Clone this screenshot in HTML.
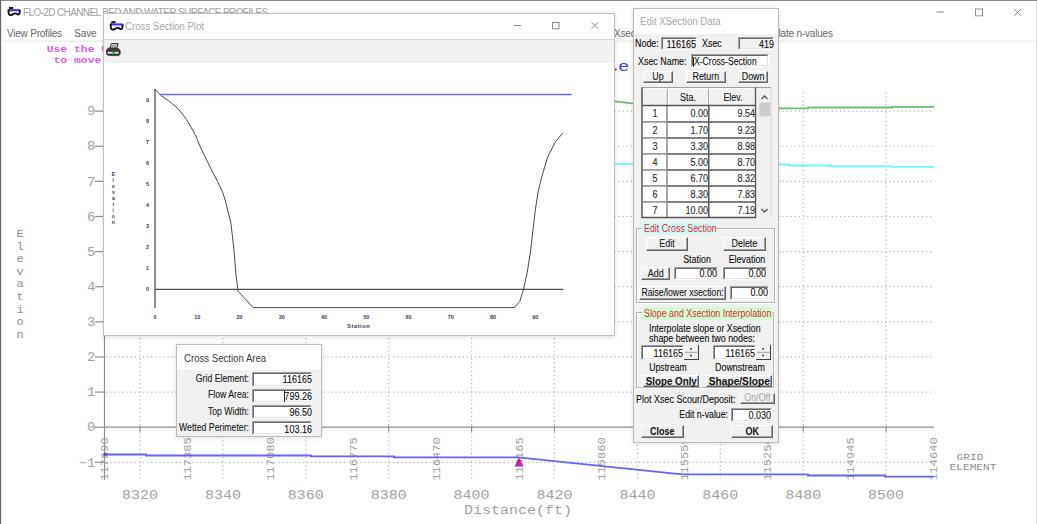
<!DOCTYPE html><html><head><meta charset="utf-8"><style>html,body{margin:0;padding:0;}body{width:1037px;height:524px;position:relative;overflow:hidden;background:#fff;font-family:"Liberation Sans",sans-serif;}.t{position:absolute;white-space:nowrap;}.k{-webkit-text-stroke:0.12px currentColor;}.b{position:absolute;box-sizing:border-box;}svg{position:absolute;left:0;top:0;}</style></head><body><svg width="1037" height="524" viewBox="0 0 1037 524"><rect x="0" y="0" width="1037" height="1" fill="#8a8a8a"/><rect x="0" y="0" width="1.2" height="524" fill="#6a6a6a"/><rect x="1036" y="1" width="1" height="523" fill="#dcdcdc"/><rect x="1" y="40.6" width="1035" height="1" fill="#e4e4e4"/><g stroke="#8c8c8c" stroke-width="1" fill="none"><line x1="936.5" y1="12" x2="944" y2="12"/><rect x="975.5" y="9" width="7" height="6.8"/><line x1="1014.2" y1="9" x2="1021" y2="15.8"/><line x1="1021" y1="9" x2="1014.2" y2="15.8"/></g><g stroke="#b4b4b4" stroke-width="1.2" stroke-dasharray="1.2 2.9" fill="none"><line x1="106" y1="111.12" x2="934" y2="111.12"/><line x1="106" y1="146.24" x2="934" y2="146.24"/><line x1="106" y1="181.36" x2="934" y2="181.36"/><line x1="106" y1="216.48" x2="934" y2="216.48"/><line x1="106" y1="251.60" x2="934" y2="251.60"/><line x1="106" y1="286.72" x2="934" y2="286.72"/><line x1="106" y1="321.84" x2="934" y2="321.84"/><line x1="106" y1="356.96" x2="934" y2="356.96"/><line x1="106" y1="392.08" x2="934" y2="392.08"/><line x1="106" y1="462.32" x2="934" y2="462.32"/><line x1="140.00" y1="92" x2="140.00" y2="479"/><line x1="222.90" y1="92" x2="222.90" y2="479"/><line x1="305.80" y1="92" x2="305.80" y2="479"/><line x1="388.70" y1="92" x2="388.70" y2="479"/><line x1="471.60" y1="92" x2="471.60" y2="479"/><line x1="554.50" y1="92" x2="554.50" y2="479"/><line x1="637.40" y1="92" x2="637.40" y2="479"/><line x1="720.30" y1="92" x2="720.30" y2="479"/><line x1="803.20" y1="92" x2="803.20" y2="479"/><line x1="886.10" y1="92" x2="886.10" y2="479"/></g><g stroke="#8e8e8e" stroke-width="1.2" fill="none"><line x1="104.5" y1="92" x2="104.5" y2="480"/><line x1="104.5" y1="427.20" x2="934" y2="427.20"/><line x1="95" y1="111.12" x2="104.5" y2="111.12"/><line x1="95" y1="146.24" x2="104.5" y2="146.24"/><line x1="95" y1="181.36" x2="104.5" y2="181.36"/><line x1="95" y1="216.48" x2="104.5" y2="216.48"/><line x1="95" y1="251.60" x2="104.5" y2="251.60"/><line x1="95" y1="286.72" x2="104.5" y2="286.72"/><line x1="95" y1="321.84" x2="104.5" y2="321.84"/><line x1="95" y1="356.96" x2="104.5" y2="356.96"/><line x1="95" y1="392.08" x2="104.5" y2="392.08"/><line x1="95" y1="427.20" x2="104.5" y2="427.20"/><line x1="95" y1="462.32" x2="104.5" y2="462.32"/><line x1="140.00" y1="425.70" x2="140.00" y2="431.70"/><line x1="222.90" y1="425.70" x2="222.90" y2="431.70"/><line x1="305.80" y1="425.70" x2="305.80" y2="431.70"/><line x1="388.70" y1="425.70" x2="388.70" y2="431.70"/><line x1="471.60" y1="425.70" x2="471.60" y2="431.70"/><line x1="554.50" y1="425.70" x2="554.50" y2="431.70"/><line x1="637.40" y1="425.70" x2="637.40" y2="431.70"/><line x1="720.30" y1="425.70" x2="720.30" y2="431.70"/><line x1="803.20" y1="425.70" x2="803.20" y2="431.70"/><line x1="886.10" y1="425.70" x2="886.10" y2="431.70"/></g><text transform="translate(95.5,115.32) scale(1,0.87)" text-anchor="end" font-family="Liberation Mono" font-size="14" fill="#a2a2a2">9</text><text transform="translate(95.5,150.44) scale(1,0.87)" text-anchor="end" font-family="Liberation Mono" font-size="14" fill="#a2a2a2">8</text><text transform="translate(95.5,185.56) scale(1,0.87)" text-anchor="end" font-family="Liberation Mono" font-size="14" fill="#a2a2a2">7</text><text transform="translate(95.5,220.68) scale(1,0.87)" text-anchor="end" font-family="Liberation Mono" font-size="14" fill="#a2a2a2">6</text><text transform="translate(95.5,255.80) scale(1,0.87)" text-anchor="end" font-family="Liberation Mono" font-size="14" fill="#a2a2a2">5</text><text transform="translate(95.5,290.92) scale(1,0.87)" text-anchor="end" font-family="Liberation Mono" font-size="14" fill="#a2a2a2">4</text><text transform="translate(95.5,326.04) scale(1,0.87)" text-anchor="end" font-family="Liberation Mono" font-size="14" fill="#a2a2a2">3</text><text transform="translate(95.5,361.16) scale(1,0.87)" text-anchor="end" font-family="Liberation Mono" font-size="14" fill="#a2a2a2">2</text><text transform="translate(95.5,396.28) scale(1,0.87)" text-anchor="end" font-family="Liberation Mono" font-size="14" fill="#a2a2a2">1</text><text transform="translate(95.5,431.40) scale(1,0.87)" text-anchor="end" font-family="Liberation Mono" font-size="14" fill="#a2a2a2">0</text><text transform="translate(95.5,466.52) scale(1,0.87)" text-anchor="end" font-family="Liberation Mono" font-size="14" fill="#a2a2a2">&#8722;1</text><text transform="translate(140.00,498.8) scale(1,0.87)" text-anchor="middle" font-family="Liberation Mono" font-size="15" fill="#a2a2a2">8320</text><text transform="translate(222.90,498.8) scale(1,0.87)" text-anchor="middle" font-family="Liberation Mono" font-size="15" fill="#a2a2a2">8340</text><text transform="translate(305.80,498.8) scale(1,0.87)" text-anchor="middle" font-family="Liberation Mono" font-size="15" fill="#a2a2a2">8360</text><text transform="translate(388.70,498.8) scale(1,0.87)" text-anchor="middle" font-family="Liberation Mono" font-size="15" fill="#a2a2a2">8380</text><text transform="translate(471.60,498.8) scale(1,0.87)" text-anchor="middle" font-family="Liberation Mono" font-size="15" fill="#a2a2a2">8400</text><text transform="translate(554.50,498.8) scale(1,0.87)" text-anchor="middle" font-family="Liberation Mono" font-size="15" fill="#a2a2a2">8420</text><text transform="translate(637.40,498.8) scale(1,0.87)" text-anchor="middle" font-family="Liberation Mono" font-size="15" fill="#a2a2a2">8440</text><text transform="translate(720.30,498.8) scale(1,0.87)" text-anchor="middle" font-family="Liberation Mono" font-size="15" fill="#a2a2a2">8460</text><text transform="translate(803.20,498.8) scale(1,0.87)" text-anchor="middle" font-family="Liberation Mono" font-size="15" fill="#a2a2a2">8480</text><text transform="translate(886.10,498.8) scale(1,0.87)" text-anchor="middle" font-family="Liberation Mono" font-size="15" fill="#a2a2a2">8500</text><text transform="translate(108.00,459) rotate(-90) scale(1,0.85)" text-anchor="middle" font-family="Liberation Mono" font-size="12" fill="#a0a0a0">117690</text><text transform="translate(190.90,459) rotate(-90) scale(1,0.85)" text-anchor="middle" font-family="Liberation Mono" font-size="12" fill="#a0a0a0">117385</text><text transform="translate(273.80,459) rotate(-90) scale(1,0.85)" text-anchor="middle" font-family="Liberation Mono" font-size="12" fill="#a0a0a0">117080</text><text transform="translate(356.70,459) rotate(-90) scale(1,0.85)" text-anchor="middle" font-family="Liberation Mono" font-size="12" fill="#a0a0a0">116775</text><text transform="translate(439.60,459) rotate(-90) scale(1,0.85)" text-anchor="middle" font-family="Liberation Mono" font-size="12" fill="#a0a0a0">116470</text><text transform="translate(522.50,459) rotate(-90) scale(1,0.85)" text-anchor="middle" font-family="Liberation Mono" font-size="12" fill="#a0a0a0">116165</text><text transform="translate(605.40,459) rotate(-90) scale(1,0.85)" text-anchor="middle" font-family="Liberation Mono" font-size="12" fill="#a0a0a0">115860</text><text transform="translate(688.30,459) rotate(-90) scale(1,0.85)" text-anchor="middle" font-family="Liberation Mono" font-size="12" fill="#a0a0a0">115555</text><text transform="translate(771.20,459) rotate(-90) scale(1,0.85)" text-anchor="middle" font-family="Liberation Mono" font-size="12" fill="#a0a0a0">115250</text><text transform="translate(854.10,459) rotate(-90) scale(1,0.85)" text-anchor="middle" font-family="Liberation Mono" font-size="12" fill="#a0a0a0">114945</text><text transform="translate(937.00,459) rotate(-90) scale(1,0.85)" text-anchor="middle" font-family="Liberation Mono" font-size="12" fill="#a0a0a0">114640</text><text transform="translate(518,514) scale(1,0.87)" text-anchor="middle" font-family="Liberation Mono" font-size="15" fill="#a2a2a2">Distance(ft)</text><text transform="translate(970,460.3) scale(1,0.87)" text-anchor="middle" font-family="Liberation Mono" font-size="11.2" fill="#8a8a8a">GRID</text><text transform="translate(973,469.6) scale(1,0.87)" text-anchor="middle" font-family="Liberation Mono" font-size="11.2" fill="#8a8a8a">ELEMENT</text><text transform="translate(20,237.00) scale(1,0.87)" text-anchor="middle" font-family="Liberation Mono" font-size="12" fill="#8e8e8e">E</text><text transform="translate(20,249.62) scale(1,0.87)" text-anchor="middle" font-family="Liberation Mono" font-size="12" fill="#8e8e8e">l</text><text transform="translate(20,262.24) scale(1,0.87)" text-anchor="middle" font-family="Liberation Mono" font-size="12" fill="#8e8e8e">e</text><text transform="translate(20,274.86) scale(1,0.87)" text-anchor="middle" font-family="Liberation Mono" font-size="12" fill="#8e8e8e">v</text><text transform="translate(20,287.48) scale(1,0.87)" text-anchor="middle" font-family="Liberation Mono" font-size="12" fill="#8e8e8e">a</text><text transform="translate(20,300.10) scale(1,0.87)" text-anchor="middle" font-family="Liberation Mono" font-size="12" fill="#8e8e8e">t</text><text transform="translate(20,312.72) scale(1,0.87)" text-anchor="middle" font-family="Liberation Mono" font-size="12" fill="#8e8e8e">i</text><text transform="translate(20,325.34) scale(1,0.87)" text-anchor="middle" font-family="Liberation Mono" font-size="12" fill="#8e8e8e">o</text><text transform="translate(20,337.96) scale(1,0.87)" text-anchor="middle" font-family="Liberation Mono" font-size="12" fill="#8e8e8e">n</text><polyline fill="none" stroke="#6cbf6c" stroke-width="1.8" points="560,99 615,101.4 632,103.4 700,106 777,108.4 808.5,108.4 808.5,107.5 892,107.5 892,106.8 934,106.8"/><polyline fill="none" stroke="#6ef7f7" stroke-width="1.8" points="560,163.5 632,164.2 789,164.3 789,165.5 831,165.5 831,166.3 892,166.3 892,166.8 934,166.8"/><polyline fill="none" stroke="#6464f5" stroke-width="1.8" points="105,454.5 146,454.5 146,455.5 311,455.5 311,456.4 394,456.4 394,457.3 518,457.3 682,474.4 808,474.4 808,475.5 885,475.5 885,476.6 934,476.6"/><circle cx="105" cy="454.5" r="1.8" fill="#5050d0"/><polygon points="519,457.5 523.5,466.5 514.5,466.5" fill="#c020b0"/><circle cx="615.6" cy="69.6" r="1.1" fill="#3a3aff"/><text transform="translate(618.6,70.6) scale(1.2,1)" font-family="Liberation Sans" font-size="15.5" fill="#3a3aff">e</text></svg><svg style="left:4px;top:4px" width="20.0" height="16.0" viewBox="0 0 20 16"><rect x="5" y="3" width="4.2" height="2" fill="#1a1a1a"/><rect x="4.6" y="5.1" width="11.2" height="2.1" fill="#3535f0"/><rect x="5.5" y="7.2" width="9.5" height="0.9" fill="#c8c8ff"/><path d="M4.5 5.2 C4.3 8,4.7 10.8,6.2 11.1 C7.8 11.4,8.8 9.9,10.3 9.6 C11.3 9.4,12.1 9.4,12.7 9.8 C13.3 10.3,13.8 10.8,14.6 10.5 C15.6 10.1,15.9 8,15.8 5.8" stroke="#111" stroke-width="1.8" fill="none"/></svg><div class="t" style="left:23.00px;top:8.04px;font-size:10px;line-height:10px;color:#a0a0a0;font-family:'Liberation Sans', sans-serif;letter-spacing:-0.62px;">FLO-2D CHANNEL BED AND WATER SURFACE PROFILES</div><div class="t" style="left:6.90px;top:29.04px;font-size:10px;line-height:10px;color:#666;font-family:'Liberation Sans', sans-serif;letter-spacing:-0.2px;">View Profiles</div><div class="t" style="left:74.30px;top:29.04px;font-size:10px;line-height:10px;color:#666;font-family:'Liberation Sans', sans-serif;letter-spacing:-0.2px;">Save</div><div class="t" style="left:614.00px;top:29.04px;font-size:10px;line-height:10px;color:#666;font-family:'Liberation Sans', sans-serif;letter-spacing:-0.2px;">Xsec</div><div class="t" style="left:778.60px;top:29.04px;font-size:10px;line-height:10px;color:#666;font-family:'Liberation Sans', sans-serif;letter-spacing:-0.2px;">late n-values</div><div class="t" style="left:46.70px;top:44.06px;font-size:11.4px;line-height:11.4px;color:#e05ae0;font-family:'Liberation Mono', monospace;font-weight:bold;transform:scaleY(0.87);transform-origin:0 8.7px;">Use the Up/Down</div><div class="t" style="left:46.70px;top:54.66px;font-size:11.4px;line-height:11.4px;color:#e05ae0;font-family:'Liberation Mono', monospace;font-weight:bold;white-space:pre;transform:scaleY(0.87);transform-origin:0 8.7px;"> to move</div><div class="b" style="left:103.00px;top:13.00px;width:512.00px;height:322.50px;background:#fff;border:1px solid #c0c0c0;box-shadow:0 1px 5px rgba(0,0,0,0.13);"></div><div class="b" style="left:104.00px;top:38.50px;width:510.00px;height:24.00px;background:#f0f0f0;border-top:1px solid #d9d9d9;"></div><svg style="left:105.5px;top:18.2px" width="21.0" height="16.8" viewBox="0 0 20 16"><rect x="5" y="3" width="4.2" height="2" fill="#1a1a1a"/><rect x="4.6" y="5.1" width="11.2" height="2.1" fill="#3535f0"/><rect x="5.5" y="7.2" width="9.5" height="0.9" fill="#c8c8ff"/><path d="M4.5 5.2 C4.3 8,4.7 10.8,6.2 11.1 C7.8 11.4,8.8 9.9,10.3 9.6 C11.3 9.4,12.1 9.4,12.7 9.8 C13.3 10.3,13.8 10.8,14.6 10.5 C15.6 10.1,15.9 8,15.8 5.8" stroke="#111" stroke-width="1.8" fill="none"/></svg><div class="t" style="left:125.20px;top:21.73px;font-size:10px;line-height:10px;color:#a6a6a6;font-family:'Liberation Sans', sans-serif;transform:scaleX(0.96);transform-origin:0 0;">Cross Section Plot</div><svg style="left:0;top:0" width="1037" height="524"><g stroke="#8a8a8a" stroke-width="1" fill="none"><line x1="514" y1="25.5" x2="521" y2="25.5"/><rect x="552.5" y="22.5" width="6.5" height="6.3"/><line x1="591.5" y1="22.3" x2="598" y2="28.8"/><line x1="598" y1="22.3" x2="591.5" y2="28.8"/></g></svg><svg style="left:104.5px;top:42px" width="18" height="16" viewBox="0 0 18 16"><path d="M6.5 1.6 L13.2 1.6 L11.6 6.2 L4.8 6.2 Z" fill="#dcdcdc" stroke="#2a2a2a" stroke-width="1"/><path d="M7 3.4 L11.5 3.4 M6.4 4.8 L11 4.8" stroke="#777" stroke-width="0.7"/><path d="M3.2 6.2 Q1.2 7.2 1.2 10 Q1.2 13.6 4.2 13.6 L12.6 13.6 Q15.4 13.6 15.4 10.4 Q15.4 7.4 13 6.2 Z" fill="#3c3c3c" stroke="#222" stroke-width="0.7"/><rect x="2.6" y="9.9" width="11" height="1.7" fill="#e4e4e4"/><rect x="7.4" y="9.9" width="2.6" height="1.7" fill="#20c030"/></svg><svg style="left:0;top:0" width="1037" height="524"><g stroke="#505050" stroke-width="1.3" fill="none"><line x1="155" y1="89" x2="155" y2="308"/><line x1="155" y1="289.3" x2="563.3" y2="289.3"/></g><line x1="160.5" y1="94.6" x2="571.7" y2="94.6" stroke="#6a6aff" stroke-width="1.5"/><polyline fill="none" stroke="#484848" stroke-width="1" stroke-linejoin="round" points="155.2,89.4 160.7,95.3 169.3,101.3 177.9,108.6 186.5,119.4 195.1,134.4 200.6,147.5 204.5,155.5 211.2,169.5 217.6,181.5 222.5,192 225.2,200 227.6,210 230.8,222.4 233.8,248.2 235.9,274 238.1,291.2 253.1,307.6 514.2,307.6 519.8,301.5 523.5,289.3 527.2,272.5 530.2,253.9 532.8,231.6 535.4,209.3 538.3,190.7 542.1,175.8 547.6,157.2 555.1,142.3 562.5,133.3"/><text x="147.6" y="290.50" text-anchor="middle" font-family="Liberation Sans" font-size="5.5" font-weight="bold" fill="#3a3a48">0</text><text x="147.6" y="269.54" text-anchor="middle" font-family="Liberation Sans" font-size="5.5" font-weight="bold" fill="#3a3a48">1</text><text x="147.6" y="248.58" text-anchor="middle" font-family="Liberation Sans" font-size="5.5" font-weight="bold" fill="#3a3a48">2</text><text x="147.6" y="227.62" text-anchor="middle" font-family="Liberation Sans" font-size="5.5" font-weight="bold" fill="#3a3a48">3</text><text x="147.6" y="206.66" text-anchor="middle" font-family="Liberation Sans" font-size="5.5" font-weight="bold" fill="#3a3a48">4</text><text x="147.6" y="185.70" text-anchor="middle" font-family="Liberation Sans" font-size="5.5" font-weight="bold" fill="#3a3a48">5</text><text x="147.6" y="164.74" text-anchor="middle" font-family="Liberation Sans" font-size="5.5" font-weight="bold" fill="#3a3a48">6</text><text x="147.6" y="143.78" text-anchor="middle" font-family="Liberation Sans" font-size="5.5" font-weight="bold" fill="#3a3a48">7</text><text x="147.6" y="122.82" text-anchor="middle" font-family="Liberation Sans" font-size="5.5" font-weight="bold" fill="#3a3a48">8</text><text x="147.6" y="101.86" text-anchor="middle" font-family="Liberation Sans" font-size="5.5" font-weight="bold" fill="#3a3a48">9</text><text x="155.00" y="319.3" text-anchor="middle" font-family="Liberation Sans" font-size="5.5" font-weight="bold" fill="#3a3a48">0</text><text x="197.25" y="319.3" text-anchor="middle" font-family="Liberation Sans" font-size="5.5" font-weight="bold" fill="#3a3a48">10</text><text x="239.50" y="319.3" text-anchor="middle" font-family="Liberation Sans" font-size="5.5" font-weight="bold" fill="#3a3a48">20</text><text x="281.75" y="319.3" text-anchor="middle" font-family="Liberation Sans" font-size="5.5" font-weight="bold" fill="#3a3a48">30</text><text x="324.00" y="319.3" text-anchor="middle" font-family="Liberation Sans" font-size="5.5" font-weight="bold" fill="#3a3a48">40</text><text x="366.25" y="319.3" text-anchor="middle" font-family="Liberation Sans" font-size="5.5" font-weight="bold" fill="#3a3a48">50</text><text x="408.50" y="319.3" text-anchor="middle" font-family="Liberation Sans" font-size="5.5" font-weight="bold" fill="#3a3a48">60</text><text x="450.75" y="319.3" text-anchor="middle" font-family="Liberation Sans" font-size="5.5" font-weight="bold" fill="#3a3a48">70</text><text x="493.00" y="319.3" text-anchor="middle" font-family="Liberation Sans" font-size="5.5" font-weight="bold" fill="#3a3a48">80</text><text x="535.25" y="319.3" text-anchor="middle" font-family="Liberation Sans" font-size="5.5" font-weight="bold" fill="#3a3a48">90</text><text x="358.7" y="327.8" text-anchor="middle" font-family="Liberation Sans" font-size="5.8" font-weight="bold" letter-spacing="0.5" fill="#3a3a48">Station</text><text x="113.3" y="175.50" text-anchor="middle" font-family="Liberation Sans" font-size="5" font-weight="bold" fill="#3a3a48">E</text><text x="113.3" y="181.60" text-anchor="middle" font-family="Liberation Sans" font-size="5" font-weight="bold" fill="#3a3a48">l</text><text x="113.3" y="187.70" text-anchor="middle" font-family="Liberation Sans" font-size="5" font-weight="bold" fill="#3a3a48">e</text><text x="113.3" y="193.80" text-anchor="middle" font-family="Liberation Sans" font-size="5" font-weight="bold" fill="#3a3a48">v</text><text x="113.3" y="199.90" text-anchor="middle" font-family="Liberation Sans" font-size="5" font-weight="bold" fill="#3a3a48">a</text><text x="113.3" y="206.00" text-anchor="middle" font-family="Liberation Sans" font-size="5" font-weight="bold" fill="#3a3a48">t</text><text x="113.3" y="212.10" text-anchor="middle" font-family="Liberation Sans" font-size="5" font-weight="bold" fill="#3a3a48">i</text><text x="113.3" y="218.20" text-anchor="middle" font-family="Liberation Sans" font-size="5" font-weight="bold" fill="#3a3a48">o</text><text x="113.3" y="224.30" text-anchor="middle" font-family="Liberation Sans" font-size="5" font-weight="bold" fill="#3a3a48">n</text></svg><div class="b" style="left:176.40px;top:344.40px;width:145.60px;height:92.40px;background:#f0f0f0;border:1px solid #bcbcbc;box-shadow:0 1px 5px rgba(0,0,0,0.13);"></div><div class="b" style="left:177.40px;top:345.40px;width:143.60px;height:24.80px;background:#fff;"></div><div class="t" style="left:183.50px;top:353.74px;font-size:10px;line-height:10px;color:#3a3a3a;font-family:'Liberation Sans', sans-serif;transform:scaleX(0.96);transform-origin:0 0;">Cross Section Area</div><div class="t k" style="left:148.90px;top:373.54px;font-size:10px;line-height:10px;color:#222;font-family:'Liberation Sans', sans-serif;width:100px;text-align:right;transform:scaleX(0.87);transform-origin:100% 0;">Grid Element:</div><div class="b" style="left:252.30px;top:372.10px;width:60.20px;height:14.50px;background:#fff;border-top:1px solid #a0a0a0;border-left:1px solid #a0a0a0;border-bottom:1px solid #fff;border-right:1px solid #fff;"></div><div class="b" style="left:253.30px;top:373.10px;width:58.20px;height:12.50px;border-top:1px solid #696969;border-left:1px solid #696969;border-bottom:1px solid #e3e3e3;border-right:1px solid #e3e3e3;"></div><div class="t k" style="left:251.50px;top:374.31px;font-size:10.5px;line-height:10.5px;color:#111;font-family:'Liberation Sans', sans-serif;width:60px;text-align:right;transform:scaleX(0.86);transform-origin:100% 0;">116165</div><div class="t k" style="left:148.90px;top:390.04px;font-size:10px;line-height:10px;color:#222;font-family:'Liberation Sans', sans-serif;width:100px;text-align:right;transform:scaleX(0.87);transform-origin:100% 0;">Flow Area:</div><div class="b" style="left:252.30px;top:388.60px;width:60.20px;height:14.40px;background:#fff;border-top:1px solid #a0a0a0;border-left:1px solid #a0a0a0;border-bottom:1px solid #fff;border-right:1px solid #fff;"></div><div class="b" style="left:253.30px;top:389.60px;width:58.20px;height:12.40px;border-top:1px solid #696969;border-left:1px solid #696969;border-bottom:1px solid #e3e3e3;border-right:1px solid #e3e3e3;"></div><div class="t k" style="left:251.50px;top:390.81px;font-size:10.5px;line-height:10.5px;color:#111;font-family:'Liberation Sans', sans-serif;width:60px;text-align:right;transform:scaleX(0.86);transform-origin:100% 0;">799.26</div><div class="t k" style="left:148.90px;top:406.54px;font-size:10px;line-height:10px;color:#222;font-family:'Liberation Sans', sans-serif;width:100px;text-align:right;transform:scaleX(0.87);transform-origin:100% 0;">Top Width:</div><div class="b" style="left:252.30px;top:405.00px;width:60.20px;height:14.40px;background:#fff;border-top:1px solid #a0a0a0;border-left:1px solid #a0a0a0;border-bottom:1px solid #fff;border-right:1px solid #fff;"></div><div class="b" style="left:253.30px;top:406.00px;width:58.20px;height:12.40px;border-top:1px solid #696969;border-left:1px solid #696969;border-bottom:1px solid #e3e3e3;border-right:1px solid #e3e3e3;"></div><div class="t k" style="left:251.50px;top:407.31px;font-size:10.5px;line-height:10.5px;color:#111;font-family:'Liberation Sans', sans-serif;width:60px;text-align:right;transform:scaleX(0.86);transform-origin:100% 0;">96.50</div><div class="t k" style="left:148.90px;top:422.84px;font-size:10px;line-height:10px;color:#222;font-family:'Liberation Sans', sans-serif;width:100px;text-align:right;transform:scaleX(0.87);transform-origin:100% 0;">Wetted Perimeter:</div><div class="b" style="left:252.30px;top:421.00px;width:60.20px;height:14.20px;background:#fff;border-top:1px solid #a0a0a0;border-left:1px solid #a0a0a0;border-bottom:1px solid #fff;border-right:1px solid #fff;"></div><div class="b" style="left:253.30px;top:422.00px;width:58.20px;height:12.20px;border-top:1px solid #696969;border-left:1px solid #696969;border-bottom:1px solid #e3e3e3;border-right:1px solid #e3e3e3;"></div><div class="t k" style="left:251.50px;top:423.61px;font-size:10.5px;line-height:10.5px;color:#111;font-family:'Liberation Sans', sans-serif;width:60px;text-align:right;transform:scaleX(0.86);transform-origin:100% 0;">103.16</div><div class="b" style="left:284.30px;top:391.00px;width:1.00px;height:11.00px;background:#222;"></div><div class="b" style="left:632.50px;top:8.00px;width:146.30px;height:434.50px;background:#f0f0f0;border:1px solid #bcbcbc;box-shadow:0 1px 5px rgba(0,0,0,0.13);"></div><div class="b" style="left:633.50px;top:9.00px;width:144.30px;height:25.40px;background:#fff;"></div><div class="t" style="left:640.30px;top:16.84px;font-size:10px;line-height:10px;color:#a6a6a6;font-family:'Liberation Sans', sans-serif;transform:scaleX(0.96);transform-origin:0 0;">Edit XSection Data</div><div class="t k" style="left:635.40px;top:39.03px;font-size:10px;line-height:10px;color:#111;font-family:'Liberation Sans', sans-serif;transform:scaleX(0.89);transform-origin:0 0;">Node:</div><div class="b" style="left:660.80px;top:36.80px;width:36.20px;height:13.40px;background:#f0f0f0;border-top:1px solid #a0a0a0;border-left:1px solid #a0a0a0;border-bottom:1px solid #fff;border-right:1px solid #fff;"></div><div class="b" style="left:661.80px;top:37.80px;width:34.20px;height:11.40px;border-top:1px solid #696969;border-left:1px solid #696969;border-bottom:1px solid #e3e3e3;border-right:1px solid #e3e3e3;"></div><div class="t k" style="left:656.00px;top:38.91px;font-size:10.5px;line-height:10.5px;color:#111;font-family:'Liberation Sans', sans-serif;width:40px;text-align:right;transform:scaleX(0.86);transform-origin:100% 0;">116165</div><div class="t k" style="left:701.90px;top:39.03px;font-size:10px;line-height:10px;color:#111;font-family:'Liberation Sans', sans-serif;transform:scaleX(0.89);transform-origin:0 0;">Xsec</div><div class="b" style="left:738.30px;top:36.80px;width:36.00px;height:13.40px;background:#f0f0f0;border-top:1px solid #a0a0a0;border-left:1px solid #a0a0a0;border-bottom:1px solid #fff;border-right:1px solid #fff;"></div><div class="b" style="left:739.30px;top:37.80px;width:34.00px;height:11.40px;border-top:1px solid #696969;border-left:1px solid #696969;border-bottom:1px solid #e3e3e3;border-right:1px solid #e3e3e3;"></div><div class="t k" style="left:733.50px;top:38.91px;font-size:10.5px;line-height:10.5px;color:#111;font-family:'Liberation Sans', sans-serif;width:40px;text-align:right;transform:scaleX(0.86);transform-origin:100% 0;">419</div><div class="t k" style="left:637.90px;top:57.03px;font-size:10px;line-height:10px;color:#111;font-family:'Liberation Sans', sans-serif;transform:scaleX(0.89);transform-origin:0 0;">Xsec Name:</div><div class="b" style="left:691.20px;top:54.10px;width:78.00px;height:13.30px;background:#fff;border-top:1px solid #a0a0a0;border-left:1px solid #a0a0a0;border-bottom:1px solid #fff;border-right:1px solid #fff;"></div><div class="b" style="left:692.20px;top:55.10px;width:76.00px;height:11.30px;border-top:1px solid #696969;border-left:1px solid #696969;border-bottom:1px solid #e3e3e3;border-right:1px solid #e3e3e3;"></div><div class="t k" style="left:693.50px;top:56.01px;font-size:10.5px;line-height:10.5px;color:#111;font-family:'Liberation Sans', sans-serif;transform:scaleX(0.82);transform-origin:0 0;">X-Cross-Section</div><div class="b" style="left:692.80px;top:56.50px;width:1.00px;height:10.00px;background:#222;"></div><div class="b" style="left:642.80px;top:70.50px;width:29.90px;height:12.50px;background:#f0f0f0;border-top:1px solid #fff;border-left:1px solid #fff;border-bottom:1px solid #646464;border-right:1px solid #646464;"></div><div class="b" style="left:643.80px;top:71.50px;width:27.90px;height:10.50px;border-bottom:1px solid #a0a0a0;border-right:1px solid #a0a0a0;"></div><div class="t k" style="left:632.80px;top:72.03px;font-size:10px;line-height:10px;color:#1a1a1a;font-family:'Liberation Sans', sans-serif;width:49.90000000000009px;text-align:center;transform:scaleX(0.89);transform-origin:50% 0;">Up</div><div class="b" style="left:686.30px;top:70.50px;width:39.70px;height:12.50px;background:#f0f0f0;border-top:1px solid #fff;border-left:1px solid #fff;border-bottom:1px solid #646464;border-right:1px solid #646464;"></div><div class="b" style="left:687.30px;top:71.50px;width:37.70px;height:10.50px;border-bottom:1px solid #a0a0a0;border-right:1px solid #a0a0a0;"></div><div class="t k" style="left:676.30px;top:72.03px;font-size:10px;line-height:10px;color:#1a1a1a;font-family:'Liberation Sans', sans-serif;width:59.700000000000045px;text-align:center;transform:scaleX(0.89);transform-origin:50% 0;">Return</div><div class="b" style="left:737.70px;top:70.50px;width:30.20px;height:12.50px;background:#f0f0f0;border-top:1px solid #fff;border-left:1px solid #fff;border-bottom:1px solid #646464;border-right:1px solid #646464;"></div><div class="b" style="left:738.70px;top:71.50px;width:28.20px;height:10.50px;border-bottom:1px solid #a0a0a0;border-right:1px solid #a0a0a0;"></div><div class="t k" style="left:727.70px;top:72.03px;font-size:10px;line-height:10px;color:#1a1a1a;font-family:'Liberation Sans', sans-serif;width:50.19999999999993px;text-align:center;transform:scaleX(0.89);transform-origin:50% 0;">Down</div><svg style="left:0;top:0" width="1037" height="524"><rect x="641.7" y="87" width="129.6" height="131.2" fill="#f0f0f0"/><rect x="642" y="87.5" width="113.8" height="18" fill="#f0f0f0"/><rect x="642" y="105.4" width="113.8" height="112" fill="#fff"/><g stroke="#a0a0a0" stroke-width="1" fill="none"><line x1="641.5" y1="87.5" x2="771.3" y2="87.5"/><line x1="667.3" y1="88" x2="667.3" y2="105"/><line x1="708.6" y1="88" x2="708.6" y2="105"/><line x1="755.5" y1="88" x2="755.5" y2="105"/></g><g stroke="#fff" stroke-width="1"><line x1="643" y1="88.8" x2="755" y2="88.8"/><line x1="668.5" y1="89" x2="668.5" y2="104"/><line x1="709.8" y1="89" x2="709.8" y2="104"/></g><g stroke="#7a7a7a" stroke-width="1.3" fill="none"><line x1="643" y1="121.9" x2="667" y2="121.9"/><line x1="643" y1="137.9" x2="667" y2="137.9"/><line x1="643" y1="153.9" x2="667" y2="153.9"/><line x1="643" y1="169.9" x2="667" y2="169.9"/><line x1="643" y1="185.9" x2="667" y2="185.9"/><line x1="643" y1="201.9" x2="667" y2="201.9"/><line x1="667" y1="106" x2="667" y2="217"/></g><g stroke="#555" stroke-width="1.5" fill="none"><line x1="642" y1="87.5" x2="642" y2="218"/><line x1="642" y1="105.6" x2="756" y2="105.6"/><line x1="642" y1="217.6" x2="756" y2="217.6"/><line x1="667.5" y1="121.9" x2="756" y2="121.9"/><line x1="667.5" y1="137.9" x2="756" y2="137.9"/><line x1="667.5" y1="153.9" x2="756" y2="153.9"/><line x1="667.5" y1="169.9" x2="756" y2="169.9"/><line x1="667.5" y1="185.9" x2="756" y2="185.9"/><line x1="667.5" y1="201.9" x2="756" y2="201.9"/><line x1="708.8" y1="105.4" x2="708.8" y2="217.6"/><line x1="755.6" y1="87.5" x2="755.6" y2="218"/></g><rect x="756.5" y="88" width="14.5" height="130" fill="#f0f0f0"/><rect x="759.4" y="102.5" width="11.2" height="13.8" fill="#cdcdcd"/><path d="M761.5 99 L764.5 96 L767.5 99" stroke="#555" stroke-width="1.3" fill="none"/><path d="M761.5 209 L764.5 212 L767.5 209" stroke="#555" stroke-width="1.3" fill="none"/><line x1="771.3" y1="87" x2="771.3" y2="218" stroke="#dcdcdc" stroke-width="1"/></svg><div class="t k" style="left:667.80px;top:92.73px;font-size:10px;line-height:10px;color:#222;font-family:'Liberation Sans', sans-serif;width:40px;text-align:center;transform:scaleX(0.89);transform-origin:50% 0;">Sta.</div><div class="t k" style="left:712.50px;top:92.73px;font-size:10px;line-height:10px;color:#222;font-family:'Liberation Sans', sans-serif;width:40px;text-align:center;transform:scaleX(0.89);transform-origin:50% 0;">Elev.</div><div class="t k" style="left:645.00px;top:108.41px;font-size:10.5px;line-height:10.5px;color:#2a2a2a;font-family:'Liberation Sans', sans-serif;width:20px;text-align:center;transform:scaleX(0.86);transform-origin:50% 0;">1</div><div class="t k" style="left:668.00px;top:108.41px;font-size:10.5px;line-height:10.5px;color:#2a2a2a;font-family:'Liberation Sans', sans-serif;width:40px;text-align:right;transform:scaleX(0.86);transform-origin:100% 0;">0.00</div><div class="t k" style="left:715.00px;top:108.41px;font-size:10.5px;line-height:10.5px;color:#2a2a2a;font-family:'Liberation Sans', sans-serif;width:40px;text-align:right;transform:scaleX(0.86);transform-origin:100% 0;">9.54</div><div class="t k" style="left:645.00px;top:124.51px;font-size:10.5px;line-height:10.5px;color:#2a2a2a;font-family:'Liberation Sans', sans-serif;width:20px;text-align:center;transform:scaleX(0.86);transform-origin:50% 0;">2</div><div class="t k" style="left:668.00px;top:124.51px;font-size:10.5px;line-height:10.5px;color:#2a2a2a;font-family:'Liberation Sans', sans-serif;width:40px;text-align:right;transform:scaleX(0.86);transform-origin:100% 0;">1.70</div><div class="t k" style="left:715.00px;top:124.51px;font-size:10.5px;line-height:10.5px;color:#2a2a2a;font-family:'Liberation Sans', sans-serif;width:40px;text-align:right;transform:scaleX(0.86);transform-origin:100% 0;">9.23</div><div class="t k" style="left:645.00px;top:140.51px;font-size:10.5px;line-height:10.5px;color:#2a2a2a;font-family:'Liberation Sans', sans-serif;width:20px;text-align:center;transform:scaleX(0.86);transform-origin:50% 0;">3</div><div class="t k" style="left:668.00px;top:140.51px;font-size:10.5px;line-height:10.5px;color:#2a2a2a;font-family:'Liberation Sans', sans-serif;width:40px;text-align:right;transform:scaleX(0.86);transform-origin:100% 0;">3.30</div><div class="t k" style="left:715.00px;top:140.51px;font-size:10.5px;line-height:10.5px;color:#2a2a2a;font-family:'Liberation Sans', sans-serif;width:40px;text-align:right;transform:scaleX(0.86);transform-origin:100% 0;">8.98</div><div class="t k" style="left:645.00px;top:156.51px;font-size:10.5px;line-height:10.5px;color:#2a2a2a;font-family:'Liberation Sans', sans-serif;width:20px;text-align:center;transform:scaleX(0.86);transform-origin:50% 0;">4</div><div class="t k" style="left:668.00px;top:156.51px;font-size:10.5px;line-height:10.5px;color:#2a2a2a;font-family:'Liberation Sans', sans-serif;width:40px;text-align:right;transform:scaleX(0.86);transform-origin:100% 0;">5.00</div><div class="t k" style="left:715.00px;top:156.51px;font-size:10.5px;line-height:10.5px;color:#2a2a2a;font-family:'Liberation Sans', sans-serif;width:40px;text-align:right;transform:scaleX(0.86);transform-origin:100% 0;">8.70</div><div class="t k" style="left:645.00px;top:172.51px;font-size:10.5px;line-height:10.5px;color:#2a2a2a;font-family:'Liberation Sans', sans-serif;width:20px;text-align:center;transform:scaleX(0.86);transform-origin:50% 0;">5</div><div class="t k" style="left:668.00px;top:172.51px;font-size:10.5px;line-height:10.5px;color:#2a2a2a;font-family:'Liberation Sans', sans-serif;width:40px;text-align:right;transform:scaleX(0.86);transform-origin:100% 0;">6.70</div><div class="t k" style="left:715.00px;top:172.51px;font-size:10.5px;line-height:10.5px;color:#2a2a2a;font-family:'Liberation Sans', sans-serif;width:40px;text-align:right;transform:scaleX(0.86);transform-origin:100% 0;">8.32</div><div class="t k" style="left:645.00px;top:188.51px;font-size:10.5px;line-height:10.5px;color:#2a2a2a;font-family:'Liberation Sans', sans-serif;width:20px;text-align:center;transform:scaleX(0.86);transform-origin:50% 0;">6</div><div class="t k" style="left:668.00px;top:188.51px;font-size:10.5px;line-height:10.5px;color:#2a2a2a;font-family:'Liberation Sans', sans-serif;width:40px;text-align:right;transform:scaleX(0.86);transform-origin:100% 0;">8.30</div><div class="t k" style="left:715.00px;top:188.51px;font-size:10.5px;line-height:10.5px;color:#2a2a2a;font-family:'Liberation Sans', sans-serif;width:40px;text-align:right;transform:scaleX(0.86);transform-origin:100% 0;">7.83</div><div class="t k" style="left:645.00px;top:204.51px;font-size:10.5px;line-height:10.5px;color:#2a2a2a;font-family:'Liberation Sans', sans-serif;width:20px;text-align:center;transform:scaleX(0.86);transform-origin:50% 0;">7</div><div class="t k" style="left:668.00px;top:204.51px;font-size:10.5px;line-height:10.5px;color:#2a2a2a;font-family:'Liberation Sans', sans-serif;width:40px;text-align:right;transform:scaleX(0.86);transform-origin:100% 0;">10.00</div><div class="t k" style="left:715.00px;top:204.51px;font-size:10.5px;line-height:10.5px;color:#2a2a2a;font-family:'Liberation Sans', sans-serif;width:40px;text-align:right;transform:scaleX(0.86);transform-origin:100% 0;">7.19</div><div class="b" style="left:636.30px;top:227.50px;width:138.80px;height:75.70px;border:1px solid #b4b4b4;box-shadow:inset 1px 1px 0 #fff, 1px 1px 0 #fff;"></div><div class="b" style="left:641.80px;top:223.20px;width:74.40px;height:11.30px;background:#ccfafa;"></div><div class="t" style="left:643.60px;top:224.13px;font-size:10px;line-height:10px;color:#e42a2a;font-family:'Liberation Sans', sans-serif;transform:scaleX(0.885);transform-origin:0 0;">Edit Cross Section</div><div class="b" style="left:646.30px;top:236.80px;width:42.10px;height:13.80px;background:#f0f0f0;border-top:1px solid #fff;border-left:1px solid #fff;border-bottom:1px solid #646464;border-right:1px solid #646464;"></div><div class="b" style="left:647.30px;top:237.80px;width:40.10px;height:11.80px;border-bottom:1px solid #a0a0a0;border-right:1px solid #a0a0a0;"></div><div class="t k" style="left:636.30px;top:239.03px;font-size:10px;line-height:10px;color:#1a1a1a;font-family:'Liberation Sans', sans-serif;width:62.10000000000002px;text-align:center;transform:scaleX(0.89);transform-origin:50% 0;">Edit</div><div class="b" style="left:722.90px;top:236.80px;width:42.80px;height:13.80px;background:#f0f0f0;border-top:1px solid #fff;border-left:1px solid #fff;border-bottom:1px solid #646464;border-right:1px solid #646464;"></div><div class="b" style="left:723.90px;top:237.80px;width:40.80px;height:11.80px;border-bottom:1px solid #a0a0a0;border-right:1px solid #a0a0a0;"></div><div class="t k" style="left:712.90px;top:239.03px;font-size:10px;line-height:10px;color:#1a1a1a;font-family:'Liberation Sans', sans-serif;width:62.80000000000007px;text-align:center;transform:scaleX(0.89);transform-origin:50% 0;">Delete</div><div class="t k" style="left:672.00px;top:254.84px;font-size:10px;line-height:10px;color:#111;font-family:'Liberation Sans', sans-serif;width:50px;text-align:center;transform:scaleX(0.89);transform-origin:50% 0;">Station</div><div class="t k" style="left:716.50px;top:254.84px;font-size:10px;line-height:10px;color:#111;font-family:'Liberation Sans', sans-serif;width:60px;text-align:center;transform:scaleX(0.89);transform-origin:50% 0;">Elevation</div><div class="b" style="left:640.50px;top:266.70px;width:29.40px;height:13.80px;background:#f0f0f0;border-top:1px solid #fff;border-left:1px solid #fff;border-bottom:1px solid #646464;border-right:1px solid #646464;"></div><div class="b" style="left:641.50px;top:267.70px;width:27.40px;height:11.80px;border-bottom:1px solid #a0a0a0;border-right:1px solid #a0a0a0;"></div><div class="t k" style="left:630.50px;top:268.84px;font-size:10px;line-height:10px;color:#1a1a1a;font-family:'Liberation Sans', sans-serif;width:49.39999999999998px;text-align:center;transform:scaleX(0.89);transform-origin:50% 0;">Add</div><div class="b" style="left:673.50px;top:266.70px;width:44.50px;height:13.10px;background:#fff;border-top:1px solid #a0a0a0;border-left:1px solid #a0a0a0;border-bottom:1px solid #fff;border-right:1px solid #fff;"></div><div class="b" style="left:674.50px;top:267.70px;width:42.50px;height:11.10px;border-top:1px solid #696969;border-left:1px solid #696969;border-bottom:1px solid #e3e3e3;border-right:1px solid #e3e3e3;"></div><div class="t k" style="left:676.50px;top:268.41px;font-size:10.5px;line-height:10.5px;color:#111;font-family:'Liberation Sans', sans-serif;width:40px;text-align:right;transform:scaleX(0.86);transform-origin:100% 0;">0.00</div><div class="b" style="left:723.40px;top:266.70px;width:43.60px;height:13.10px;background:#fff;border-top:1px solid #a0a0a0;border-left:1px solid #a0a0a0;border-bottom:1px solid #fff;border-right:1px solid #fff;"></div><div class="b" style="left:724.40px;top:267.70px;width:41.60px;height:11.10px;border-top:1px solid #696969;border-left:1px solid #696969;border-bottom:1px solid #e3e3e3;border-right:1px solid #e3e3e3;"></div><div class="t k" style="left:725.50px;top:268.41px;font-size:10.5px;line-height:10.5px;color:#111;font-family:'Liberation Sans', sans-serif;width:40px;text-align:right;transform:scaleX(0.86);transform-origin:100% 0;">0.00</div><div class="b" style="left:638.70px;top:285.70px;width:87.10px;height:14.30px;background:#f0f0f0;border-top:1px solid #fff;border-left:1px solid #fff;border-bottom:1px solid #646464;border-right:1px solid #646464;"></div><div class="b" style="left:639.70px;top:286.70px;width:85.10px;height:12.30px;border-bottom:1px solid #a0a0a0;border-right:1px solid #a0a0a0;"></div><div class="t k" style="left:628.70px;top:287.84px;font-size:10px;line-height:10px;color:#1a1a1a;font-family:'Liberation Sans', sans-serif;width:107.09999999999991px;text-align:center;transform:scaleX(0.87);transform-origin:50% 0;">Raise/lower xsection:</div><div class="b" style="left:730.30px;top:285.70px;width:38.50px;height:13.90px;background:#fff;border-top:1px solid #a0a0a0;border-left:1px solid #a0a0a0;border-bottom:1px solid #fff;border-right:1px solid #fff;"></div><div class="b" style="left:731.30px;top:286.70px;width:36.50px;height:11.90px;border-top:1px solid #696969;border-left:1px solid #696969;border-bottom:1px solid #e3e3e3;border-right:1px solid #e3e3e3;"></div><div class="t k" style="left:727.50px;top:287.41px;font-size:10.5px;line-height:10.5px;color:#111;font-family:'Liberation Sans', sans-serif;width:40px;text-align:right;transform:scaleX(0.86);transform-origin:100% 0;">0.00</div><div class="b" style="left:636.30px;top:312.20px;width:137.90px;height:76.00px;border:1px solid #b4b4b4;box-shadow:inset 1px 1px 0 #fff, 1px 1px 0 #fff;"></div><div class="b" style="left:642.00px;top:307.30px;width:130.00px;height:12.50px;background:#d2fad2;"></div><div class="t" style="left:643.60px;top:308.84px;font-size:10px;line-height:10px;color:#d83030;font-family:'Liberation Sans', sans-serif;transform:scaleX(0.885);transform-origin:0 0;">Slope and Xsection Interpolation</div><div class="t k" style="left:649.00px;top:323.54px;font-size:10px;line-height:10px;color:#111;font-family:'Liberation Sans', sans-serif;transform:scaleX(0.88);transform-origin:0 0;">Interpolate slope or Xsection</div><div class="t k" style="left:649.00px;top:334.34px;font-size:10px;line-height:10px;color:#111;font-family:'Liberation Sans', sans-serif;transform:scaleX(0.89);transform-origin:0 0;">shape between two nodes:</div><div class="b" style="left:641.20px;top:345.30px;width:43.20px;height:14.70px;background:#fff;border-top:1px solid #a0a0a0;border-left:1px solid #a0a0a0;border-bottom:1px solid #fff;border-right:1px solid #fff;"></div><div class="b" style="left:642.20px;top:346.30px;width:41.20px;height:12.70px;border-top:1px solid #696969;border-left:1px solid #696969;border-bottom:1px solid #e3e3e3;border-right:1px solid #e3e3e3;"></div><div class="t k" style="left:642.90px;top:347.81px;font-size:10.5px;line-height:10.5px;color:#111;font-family:'Liberation Sans', sans-serif;width:40px;text-align:right;transform:scaleX(0.86);transform-origin:100% 0;">116165</div><div class="b" style="left:684.40px;top:345.30px;width:14.20px;height:14.70px;background:#f0f0f0;border-right:1px solid #404040;border-bottom:1px solid #404040;"></div><svg style="left:684.4px;top:345.3px" width="14.200000000000045" height="14.699999999999989"><line x1="1" y1="7.3" x2="13.2" y2="7.3" stroke="#a0a0a0" stroke-width="1"/><rect x="6.1" y="3" width="1.6" height="1.6" fill="#333"/><rect x="6.1" y="9.7" width="1.6" height="1.6" fill="#333"/></svg><div class="b" style="left:713.10px;top:345.30px;width:42.90px;height:14.70px;background:#fff;border-top:1px solid #a0a0a0;border-left:1px solid #a0a0a0;border-bottom:1px solid #fff;border-right:1px solid #fff;"></div><div class="b" style="left:714.10px;top:346.30px;width:40.90px;height:12.70px;border-top:1px solid #696969;border-left:1px solid #696969;border-bottom:1px solid #e3e3e3;border-right:1px solid #e3e3e3;"></div><div class="t k" style="left:714.50px;top:347.81px;font-size:10.5px;line-height:10.5px;color:#111;font-family:'Liberation Sans', sans-serif;width:40px;text-align:right;transform:scaleX(0.86);transform-origin:100% 0;">116165</div><div class="b" style="left:756.00px;top:345.30px;width:14.60px;height:14.70px;background:#f0f0f0;border-right:1px solid #404040;border-bottom:1px solid #404040;"></div><svg style="left:756px;top:345.3px" width="14.600000000000023" height="14.699999999999989"><line x1="1" y1="7.3" x2="13.6" y2="7.3" stroke="#a0a0a0" stroke-width="1"/><rect x="6.3" y="3" width="1.6" height="1.6" fill="#333"/><rect x="6.3" y="9.7" width="1.6" height="1.6" fill="#333"/></svg><div class="t k" style="left:637.60px;top:363.14px;font-size:10px;line-height:10px;color:#111;font-family:'Liberation Sans', sans-serif;width:60px;text-align:center;transform:scaleX(0.86);transform-origin:50% 0;">Upstream</div><div class="t k" style="left:705.20px;top:363.14px;font-size:10px;line-height:10px;color:#111;font-family:'Liberation Sans', sans-serif;width:70px;text-align:center;transform:scaleX(0.89);transform-origin:50% 0;">Downstream</div><div class="b" style="left:642.70px;top:374.70px;width:56.60px;height:12.60px;background:#f0f0f0;border-top:1px solid #fff;border-left:1px solid #fff;border-bottom:1px solid #646464;border-right:1px solid #646464;"></div><div class="b" style="left:643.70px;top:375.70px;width:54.60px;height:10.60px;border-bottom:1px solid #a0a0a0;border-right:1px solid #a0a0a0;"></div><div class="t k" style="left:632.70px;top:375.71px;font-size:10.5px;line-height:10.5px;color:#1a1a1a;font-family:'Liberation Sans', sans-serif;font-weight:bold;width:76.59999999999991px;text-align:center;transform:scaleX(0.93);transform-origin:50% 0;">Slope Only</div><div class="b" style="left:705.80px;top:374.70px;width:66.60px;height:12.60px;background:#f0f0f0;border-top:1px solid #fff;border-left:1px solid #fff;border-bottom:1px solid #646464;border-right:1px solid #646464;"></div><div class="b" style="left:706.80px;top:375.70px;width:64.60px;height:10.60px;border-bottom:1px solid #a0a0a0;border-right:1px solid #a0a0a0;"></div><div class="t k" style="left:695.80px;top:375.71px;font-size:10.5px;line-height:10.5px;color:#1a1a1a;font-family:'Liberation Sans', sans-serif;font-weight:bold;width:86.60000000000002px;text-align:center;transform:scaleX(0.97);transform-origin:50% 0;">Shape/Slope</div><div class="t k" style="left:636.20px;top:394.64px;font-size:10px;line-height:10px;color:#111;font-family:'Liberation Sans', sans-serif;transform:scaleX(0.9);transform-origin:0 0;">Plot Xsec Scour/Deposit:</div><div class="b" style="left:740.30px;top:392.70px;width:34.70px;height:11.30px;background:#f0f0f0;border-top:1px solid #fff;border-left:1px solid #fff;border-bottom:1px solid #646464;border-right:1px solid #646464;"></div><div class="b" style="left:741.30px;top:393.70px;width:32.70px;height:9.30px;border-bottom:1px solid #a0a0a0;border-right:1px solid #a0a0a0;"></div><div class="t" style="left:730.30px;top:393.14px;font-size:10px;line-height:10px;color:#a8a8a8;font-family:'Liberation Sans', sans-serif;width:54.700000000000045px;text-align:center;transform:scaleX(0.89);transform-origin:50% 0;">On/Off</div><div class="t k" style="left:667.50px;top:410.14px;font-size:10px;line-height:10px;color:#111;font-family:'Liberation Sans', sans-serif;width:60px;text-align:right;transform:scaleX(0.875);transform-origin:100% 0;">Edit n-value:</div><div class="b" style="left:731.10px;top:407.80px;width:40.90px;height:14.40px;background:#fff;border-top:1px solid #a0a0a0;border-left:1px solid #a0a0a0;border-bottom:1px solid #fff;border-right:1px solid #fff;"></div><div class="b" style="left:732.10px;top:408.80px;width:38.90px;height:12.40px;border-top:1px solid #696969;border-left:1px solid #696969;border-bottom:1px solid #e3e3e3;border-right:1px solid #e3e3e3;"></div><div class="t k" style="left:730.80px;top:410.11px;font-size:10.5px;line-height:10.5px;color:#111;font-family:'Liberation Sans', sans-serif;width:40px;text-align:right;transform:scaleX(0.86);transform-origin:100% 0;">0.030</div><div class="b" style="left:641.10px;top:425.00px;width:42.60px;height:13.00px;background:#f0f0f0;border-top:1px solid #fff;border-left:1px solid #fff;border-bottom:1px solid #646464;border-right:1px solid #646464;"></div><div class="b" style="left:642.10px;top:426.00px;width:40.60px;height:11.00px;border-bottom:1px solid #a0a0a0;border-right:1px solid #a0a0a0;"></div><div class="t k" style="left:631.10px;top:426.54px;font-size:10px;line-height:10px;color:#1a1a1a;font-family:'Liberation Sans', sans-serif;font-weight:bold;width:62.60000000000002px;text-align:center;transform:scaleX(0.9);transform-origin:50% 0;">Close</div><div class="b" style="left:731.10px;top:425.00px;width:42.40px;height:13.00px;background:#f0f0f0;border-top:1px solid #fff;border-left:1px solid #fff;border-bottom:1px solid #646464;border-right:1px solid #646464;"></div><div class="b" style="left:732.10px;top:426.00px;width:40.40px;height:11.00px;border-bottom:1px solid #a0a0a0;border-right:1px solid #a0a0a0;"></div><div class="t k" style="left:721.10px;top:426.54px;font-size:10px;line-height:10px;color:#1a1a1a;font-family:'Liberation Sans', sans-serif;font-weight:bold;width:62.39999999999998px;text-align:center;transform:scaleX(0.9);transform-origin:50% 0;">OK</div></body></html>
